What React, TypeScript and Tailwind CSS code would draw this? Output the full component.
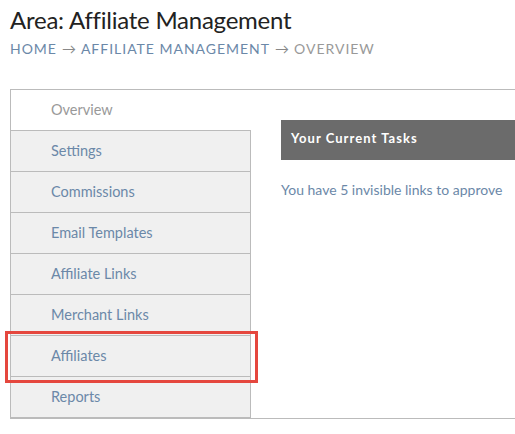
import React from "react";

const items = [
  "Overview",
  "Settings",
  "Commissions",
  "Email Templates",
  "Affiliate Links",
  "Merchant Links",
  "Affiliates",
  "Reports",
];

export default function App() {
  return (
    <div
      className="relative w-[515px] h-[434px] overflow-hidden bg-white"
      style={{ fontFamily: "Lato, 'Open Sans', sans-serif" }}
    >
      <div className="pl-[10px] pt-[6px]">
        <h1 className="text-[24px] leading-[28px] text-[#222] tracking-[-0.01em]">Area: Affiliate Management</h1>
        <div className="mt-[6px] text-[14px] leading-[18px] tracking-[0.07em] uppercase text-[#6b88a8] flex items-center">
          <span>Home</span>
          <span className="text-[#888] mx-[5px] tracking-normal">→</span>
          <span>Affiliate Management</span>
          <span className="text-[#888] mx-[5px] tracking-normal">→</span>
          <span className="text-[#999]">Overview</span>
        </div>
      </div>
      <div className="mt-[31px] ml-[10px] w-[520px] border-t border-l border-b border-[#bbb] flex">
        <div className="w-[240px] flex flex-col">
          {items.map((it, i) => (
            <div
              key={it}
              className={
                i === 0
                  ? "h-[41px] border-b border-[#bbb] bg-white flex items-center pl-[40px] text-[14.5px] text-[#999]"
                  : "h-[41px] border-b border-r border-[#bbb] bg-[#f0f0f0] flex items-center pl-[40px] text-[14.5px] text-[#6b88a8]"
              }
            >
              {it}
            </div>
          ))}
        </div>
        <div className="flex-1 pl-[30px] pt-[30px]">
          <div className="h-[40px] bg-[#6b6b6b] flex items-center pl-[10px] pb-[2px] text-white text-[13px] font-bold tracking-[0.08em]">
            Your Current Tasks
          </div>
          <p className="mt-[21px] text-[14px] leading-[18px] text-[#6b88a8]">
            You have 5 invisible links to approve
          </p>
        </div>
      </div>
      <div className="absolute left-[5px] top-[331px] w-[253px] h-[52px] border-[3px] border-[#e5473e]" />
    </div>
  );
}
